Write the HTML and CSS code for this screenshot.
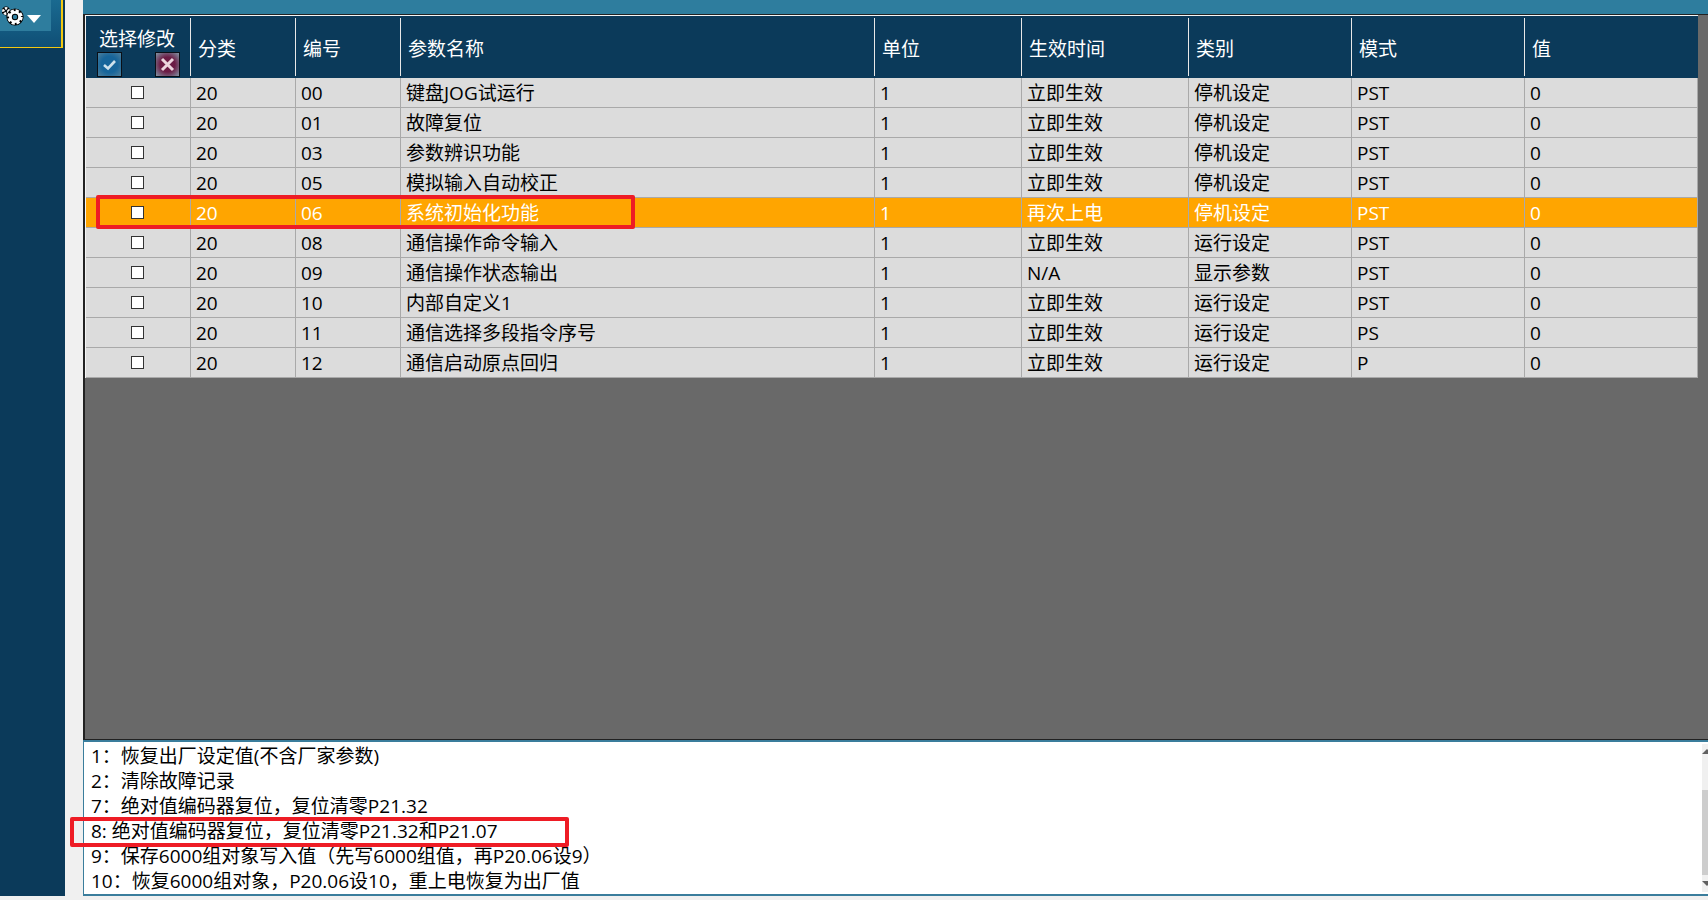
FILE: index.html
```html
<!DOCTYPE html>
<html lang="zh-CN">
<head>
    <meta charset="UTF-8">
    <title>参数设置</title>
    <link rel="stylesheet" href="styles.css">
</head>
<body>
    <div class="app">
        <aside class="sidebar">
            <div class="tool-panel">
                <div class="tool-btn">
                    <svg class="gear" width="22" height="20" viewBox="0 0 22 20">
                        <circle cx="4" cy="5" r="2.4" fill="none" stroke="#000" stroke-width="4"/>
                        <circle cx="4" cy="5" r="2.6" fill="none" stroke="#fff" stroke-width="2.6" stroke-dasharray="2.4 1.2"/>
                        <circle cx="13" cy="11" r="5.4" fill="none" stroke="#000" stroke-width="6.4"/>
                        <circle cx="13" cy="11" r="4.6" fill="none" stroke="#fff" stroke-width="2.8"/>
                        <circle cx="13" cy="11" r="6.4" fill="none" stroke="#fff" stroke-width="2.6" stroke-dasharray="3.2 1.8"/>
                    </svg>
                    <span class="caret"></span>
                </div>
            </div>
        </aside>

        <main class="main">
            <div class="topbar"></div>

            <div class="grid-area">
                <table class="param-table">
                    <thead>
                        <tr>
                            <th class="col-select">
                                <div class="select-title">选择修改</div>
                                <div class="select-btns">
                                    <span class="mini-btn mini-ok">
                                        <svg width="15" height="13" viewBox="0 0 15 13"><path d="M2 7 L6 10.5 L13 3" fill="none" stroke="#cfe2ec" stroke-width="2.6"/></svg>
                                    </span>
                                    <span class="mini-btn mini-no">
                                        <svg width="15" height="15" viewBox="0 0 15 15"><path d="M2 2 L13 13 M13 2 L2 13" fill="none" stroke="#ecd6de" stroke-width="3"/></svg>
                                    </span>
                                </div>
                            </th>
                            <th class="col-group"><span>分类</span></th>
                            <th class="col-num"><span>编号</span></th>
                            <th class="col-name"><span>参数名称</span></th>
                            <th class="col-unit"><span>单位</span></th>
                            <th class="col-time"><span>生效时间</span></th>
                            <th class="col-type"><span>类别</span></th>
                            <th class="col-mode"><span>模式</span></th>
                            <th class="col-value"><span>值</span></th>
                        </tr>
                    </thead>
                    <tbody>
                        <tr><td class="check"><span class="box"></span></td><td>20</td><td>00</td><td>键盘JOG试运行</td><td>1</td><td>立即生效</td><td>停机设定</td><td>PST</td><td>0</td></tr>
                        <tr><td class="check"><span class="box"></span></td><td>20</td><td>01</td><td>故障复位</td><td>1</td><td>立即生效</td><td>停机设定</td><td>PST</td><td>0</td></tr>
                        <tr><td class="check"><span class="box"></span></td><td>20</td><td>03</td><td>参数辨识功能</td><td>1</td><td>立即生效</td><td>停机设定</td><td>PST</td><td>0</td></tr>
                        <tr><td class="check"><span class="box"></span></td><td>20</td><td>05</td><td>模拟输入自动校正</td><td>1</td><td>立即生效</td><td>停机设定</td><td>PST</td><td>0</td></tr>
                        <tr class="selected"><td class="check"><span class="box"></span></td><td>20</td><td>06</td><td>系统初始化功能</td><td>1</td><td>再次上电</td><td>停机设定</td><td>PST</td><td>0</td></tr>
                        <tr><td class="check"><span class="box"></span></td><td>20</td><td>08</td><td>通信操作命令输入</td><td>1</td><td>立即生效</td><td>运行设定</td><td>PST</td><td>0</td></tr>
                        <tr><td class="check"><span class="box"></span></td><td>20</td><td>09</td><td>通信操作状态输出</td><td>1</td><td>N/A</td><td>显示参数</td><td>PST</td><td>0</td></tr>
                        <tr><td class="check"><span class="box"></span></td><td>20</td><td>10</td><td>内部自定义1</td><td>1</td><td>立即生效</td><td>运行设定</td><td>PST</td><td>0</td></tr>
                        <tr><td class="check"><span class="box"></span></td><td>20</td><td>11</td><td>通信选择多段指令序号</td><td>1</td><td>立即生效</td><td>运行设定</td><td>PS</td><td>0</td></tr>
                        <tr><td class="check"><span class="box"></span></td><td>20</td><td>12</td><td>通信启动原点回归</td><td>1</td><td>立即生效</td><td>运行设定</td><td>P</td><td>0</td></tr>
                    </tbody>
                </table>
            </div>

            <div class="notes">
                <div class="notes-text">
                    <p>1：恢复出厂设定值(不含厂家参数)</p>
                    <p>2：清除故障记录</p>
                    <p>7：绝对值编码器复位，复位清零P21.32</p>
                    <p>8: 绝对值编码器复位，复位清零P21.32和P21.07</p>
                    <p>9：保存6000组对象写入值（先写6000组值，再P20.06设9）</p>
                    <p>10：恢复6000组对象，P20.06设10，重上电恢复为出厂值</p>
                </div>
                <div class="scrollbar">
                    <span class="arrow arrow-up"></span>
                    <span class="thumb"></span>
                    <span class="arrow arrow-down"></span>
                </div>
            </div>
        </main>
    </div>

    <!-- red marks drawn over the screenshot -->
    <div class="mark mark-row"></div>
    <div class="mark mark-note"></div>
</body>
</html>
```

FILE: styles.css
```css
html, body {
    margin: 0;
    height: 900px;
    overflow: hidden;
    background-color: #f0f0f0;
    font-family: "Open Sans", "Noto Sans CJK SC", sans-serif;
    font-size: 19px;
    color: #000;
}

.app {
    display: flex;
    height: 896px;
}

.sidebar {
    width: 65px;
    flex-shrink: 0;
    background-color: #0b3a5a;
}

.tool-panel {
    width: 61px;
    height: 47px;
    background: linear-gradient(#1a6a90, #0f4f76);
    border-right: 2px solid #f2c811;
    border-bottom: 1px solid #f2c811;
}

.tool-btn {
    width: 51px;
    height: 31px;
    background-color: #2e7d9e;
    display: flex;
    align-items: flex-start;
    padding-left: 2px;
    box-sizing: border-box;
}

.gear {
    margin-top: 6px;
    flex-shrink: 0;
}

.caret {
    margin: 15px 0 0 3px;
    border-left: 7px solid transparent;
    border-right: 7px solid transparent;
    border-top: 8px solid #fff;
}

.main {
    flex: 1;
    margin-left: 18px;
    display: flex;
    flex-direction: column;
    min-width: 0;
}

.topbar {
    height: 14px;
    background-color: #2e7d9e;
}

.grid-area {
    flex: 1;
    background-color: #696969;
    border-top: 1px solid #222;
    border-left: 2px solid #222;
    border-bottom: 1px solid #222;
    min-height: 0;
}

.param-table {
    width: 1612px;
    table-layout: fixed;
    border-collapse: separate;
    border-spacing: 0;
    border-top: 1px solid #f5f5f5;
    border-left: 1px solid #f5f5f5;
}

.col-select { width: 105px; }
.col-group { width: 105px; }
.col-num { width: 105px; }
.col-name { width: 474px; }
.col-unit { width: 147px; }
.col-time { width: 167px; }
.col-type { width: 163px; }
.col-mode { width: 173px; }
.col-value { width: 173px; }

th {
    height: 62px;
    padding: 1px 0 0 7px;
    background-color: #0b3a5a;
    color: #fff;
    font-weight: 400;
    text-align: left;
    box-sizing: border-box;
    position: relative;
}

th:not(:last-child)::after {
    content: "";
    position: absolute;
    top: 2px;
    bottom: 2px;
    right: -1px;
    width: 2px;
    background-color: #e8e8e8;
}

th.col-select {
    padding: 0;
    text-align: center;
    vertical-align: top;
}

.select-title {
    line-height: 24px;
    margin-top: 11px;
    padding-right: 3px;
}

.select-btns {
    display: flex;
    justify-content: space-between;
    padding: 0 11px;
    margin-top: 1px;
}

.mini-btn {
    width: 25px;
    height: 25px;
    box-sizing: border-box;
    border: 1px solid #0a0f16;
    display: flex;
    align-items: center;
    justify-content: center;
}

.mini-ok {
    background: radial-gradient(#17659a 50%, #4d7f9c);
}

.mini-no {
    background: radial-gradient(#6b1c45 45%, #8296a6);
}

td {
    height: 30px;
    padding: 2px 0 0 5px;
    box-sizing: border-box;
    background-color: #dcdcdc;
    border-right: 1px solid #a9a9a9;
    border-bottom: 1px solid #a9a9a9;
    line-height: 27px;
    white-space: nowrap;
    overflow: hidden;
}

td.check {
    padding: 0 2px 0 0;
    text-align: center;
}

.box {
    display: inline-block;
    width: 13px;
    height: 13px;
    box-sizing: border-box;
    border: 1px solid #333;
    background-color: #fff;
    vertical-align: middle;
    margin-top: -3px;
}

.selected td {
    background-color: #ffa500;
    color: #fff;
}

.notes {
    height: 156px;
    display: flex;
    background-color: #fff;
    border-top: 2px solid #3a7d9c;
    border-bottom: 2px solid #3a7d9c;
    border-left: 1px solid #3a7d9c;
    box-sizing: border-box;
}

.notes-text {
    flex: 1;
    padding: 2px 0 0 7px;
    line-height: 25px;
}

.notes-text p {
    margin: 0;
}

.scrollbar {
    width: 6px;
    margin: 2px 0;
    display: flex;
    flex-direction: column;
    background-color: #f0f0f0;
    overflow: hidden;
}

.arrow {
    height: 46px;
    flex-shrink: 0;
    position: relative;
}

.arrow-down {
    height: 17px;
}

.arrow::after {
    content: "";
    position: absolute;
    left: 0;
    border-right: 5px solid transparent;
    border-left: 5px solid transparent;
}

.arrow-up::after {
    top: 5px;
    border-bottom: 5px solid #606060;
}

.arrow-down::after {
    top: 6px;
    border-top: 5px solid #606060;
}

.thumb {
    flex: 1;
    background-color: #cdcdcd;
}

.mark {
    position: absolute;
    box-sizing: border-box;
    border: 4px solid #ee1c25;
    border-radius: 2px;
}

.mark-row {
    left: 96px;
    top: 195px;
    width: 539px;
    height: 34px;
}

.mark-note {
    left: 70px;
    top: 817px;
    width: 499px;
    height: 30px;
}
```
